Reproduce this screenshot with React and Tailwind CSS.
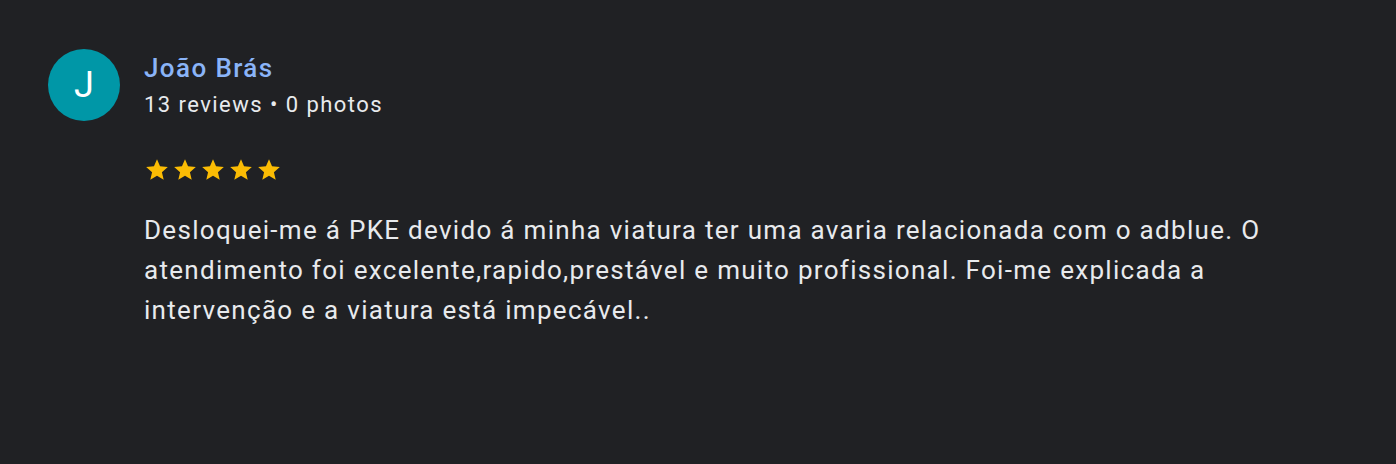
const Star = () => (
  <svg viewBox="0 0 24 24" className="h-[26px] w-[26px]" fill="#fbbc04">
    <path d="M12 17.27L18.18 21l-1.64-7.03L22 9.24l-7.19-.61L12 2 9.19 8.63 2 9.24l5.46 4.73L5.82 21z" />
  </svg>
);

export default function App() {
  return (
    <div
      className="min-h-screen w-full bg-[#202124] pl-12 pr-12 pt-[49px]"
      style={{ fontFamily: 'Roboto, "Liberation Sans", sans-serif' }}
    >
      <div className="flex gap-6">
        <div className="flex h-[72px] w-[72px] shrink-0 items-center justify-center rounded-full bg-[#0097a7] text-[36px] text-white">
          J
        </div>
        <div className="flex flex-col pt-[3px]">
          <div className="text-[26px] font-medium leading-[32px] tracking-[1.4px] text-[#8ab4f8]">
            João Brás
          </div>
          <div className="mt-[7px] text-[22px] leading-[28px] tracking-[1.45px] text-[#e8eaed]">
            13 reviews • 0 photos
          </div>
          <div className="mt-[38px] flex gap-[2px]">
            <Star />
            <Star />
            <Star />
            <Star />
            <Star />
          </div>
          <p className="mt-[27px] max-w-[1160px] text-[26px] leading-[40px] tracking-[1.3px] text-[#e8eaed]">
            Desloquei-me á PKE devido á minha viatura ter uma avaria relacionada com o adblue. O
            atendimento foi excelente,rapido,prestável e muito profissional. Foi-me explicada a
            intervenção e a viatura está impecável..
          </p>
        </div>
      </div>
    </div>
  );
}
